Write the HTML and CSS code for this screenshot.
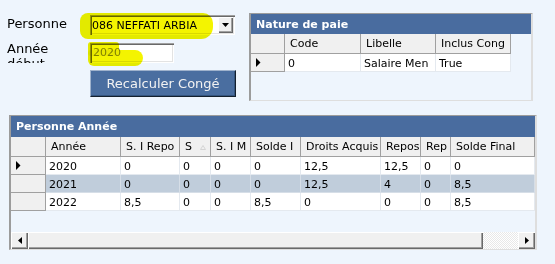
FILE: index.html
```html
<!DOCTYPE html>
<html>
<head>
    <title>Congés</title>
    <link rel="stylesheet" href="styles.css">
</head>
<body>
    <div class="screen">
        <div class="top">
            <div class="form">
                <label class="lbl lbl-first">Personne</label>
                <div class="combo">
                    <span class="combo-text">086 NEFFATI ARBIA</span>
                    <span class="drop"><svg width="7" height="4" viewBox="0 0 7 4"><polygon points="0,0 7,0 3.5,4" fill="#000"/></svg></span>
                </div>
                <label class="lbl lbl-second">Année<br>début</label>
                <div class="textbox">2020</div>
                <button class="btn">Recalculer Congé</button>

                <!-- marker highlights drawn over the fields -->
                <span class="mark mark-combo"></span>
                <span class="mark mark-year-a"></span>
                <span class="mark mark-year-b"></span>
            </div>

            <div class="panel nature">
                <div class="panel-title">Nature de paie</div>
                <div class="grid-row head">
                    <div class="rh"></div>
                    <div class="hc">Code</div>
                    <div class="hc">Libelle</div>
                    <div class="hc">Inclus Cong</div>
                </div>
                <div class="grid-row data">
                    <div class="rh"><svg width="5" height="9" viewBox="0 0 5 9"><polygon points="0,0 4.5,4.5 0,9" fill="#000"/></svg></div>
                    <div class="dc">0</div>
                    <div class="dc">Salaire Men</div>
                    <div class="dc">True</div>
                </div>
            </div>
        </div>

        <div class="panel annees">
            <div class="panel-title">Personne Année</div>
            <div class="grid-row head">
                <div class="rh"></div>
                <div class="hc">Année</div>
                <div class="hc">S. I Repo</div>
                <div class="hc">S <svg class="sort" width="6" height="5" viewBox="0 0 6 5"><polygon points="3,0.5 5.5,4.5 0.5,4.5" fill="none" stroke="#d4d4d4" stroke-width="1"/></svg></div>
                <div class="hc">S. I M</div>
                <div class="hc">Solde I</div>
                <div class="hc">Droits Acquis</div>
                <div class="hc">Repos</div>
                <div class="hc">Rep</div>
                <div class="hc">Solde Final</div>
            </div>
            <div class="grid-row data">
                <div class="rh"><svg width="5" height="9" viewBox="0 0 5 9"><polygon points="0,0 4.5,4.5 0,9" fill="#000"/></svg></div>
                <div class="dc">2020</div>
                <div class="dc">0</div>
                <div class="dc">0</div>
                <div class="dc">0</div>
                <div class="dc">0</div>
                <div class="dc">12,5</div>
                <div class="dc">12,5</div>
                <div class="dc">0</div>
                <div class="dc">0</div>
            </div>
            <div class="grid-row data sel">
                <div class="rh"></div>
                <div class="dc">2021</div>
                <div class="dc">0</div>
                <div class="dc">0</div>
                <div class="dc">0</div>
                <div class="dc">0</div>
                <div class="dc">12,5</div>
                <div class="dc">4</div>
                <div class="dc">0</div>
                <div class="dc">8,5</div>
            </div>
            <div class="grid-row data">
                <div class="rh"></div>
                <div class="dc">2022</div>
                <div class="dc">8,5</div>
                <div class="dc">0</div>
                <div class="dc">0</div>
                <div class="dc">8,5</div>
                <div class="dc">0</div>
                <div class="dc">0</div>
                <div class="dc">0</div>
                <div class="dc">8,5</div>
            </div>
            <div class="filler"></div>
            <div class="hscroll">
                <div class="sb-btn"><svg width="4" height="7" viewBox="0 0 4 7"><polygon points="4,0 0,3.5 4,7" fill="#000"/></svg></div>
                <div class="sb-thumb"></div>
                <div class="sb-track"></div>
                <div class="sb-btn"><svg width="4" height="7" viewBox="0 0 4 7"><polygon points="0,0 4,3.5 0,7" fill="#000"/></svg></div>
            </div>
        </div>
    </div>
</body>
</html>
```

FILE: styles.css
```css
* {
    box-sizing: border-box;
}
body {
    margin: 0;
    background-color: #eef5fd;
    font-family: "DejaVu Sans", Verdana, sans-serif;
    color: #000;
}
.screen {
    padding-top: 13px;
}
.top {
    display: flex;
    align-items: flex-start;
}

/* left form */
.form {
    position: relative;
    width: 249px;
    padding: 2px 0 0 7px;
    display: grid;
    grid-template-columns: 83px 146px;
    align-items: start;
}
.lbl {
    font-size: 13px;
}
.lbl-first {
    line-height: 17px;
}
.lbl-second {
    margin-top: 6px;
    height: 22px;
    line-height: 15px;
    overflow: hidden;
}
.combo {
    width: 145px;
    height: 20px;
    display: flex;
    align-items: center;
    background-color: #fff;
    box-shadow: inset 1px 1px 0 #a0a0a0, inset 2px 2px 0 #696969, inset -1px -1px 0 #fff, inset -2px -2px 0 #e3e3e3;
}
.combo-text {
    flex: 1;
    font-size: 11px;
    padding-left: 2px;
    padding-top: 1px;
    white-space: nowrap;
}
.drop {
    width: 15px;
    height: 16px;
    margin-right: 2px;
    display: flex;
    align-items: center;
    justify-content: center;
    background-color: #f0f0f0;
    box-shadow: inset 1px 1px 0 #fff, inset -1px -1px 0 #696969, inset -2px -2px 0 #a0a0a0;
}
.textbox {
    margin-top: 8px;
    width: 84px;
    height: 20px;
    padding: 3px 0 0 3px;
    font-size: 11px;
    line-height: 14px;
    color: #8c8c8c;
    background-color: #fff;
    box-shadow: inset 1px 1px 0 #a0a0a0, inset 2px 2px 0 #696969, inset -1px -1px 0 #fff, inset -2px -2px 0 #e3e3e3;
}
.btn {
    grid-column: 2;
    margin-top: 7px;
    width: 146px;
    height: 27px;
    padding: 0;
    font-family: "DejaVu Sans", Verdana, sans-serif;
    font-size: 13px;
    color: #f2f2f2;
    background-color: #4a6ea0;
    border: 1px solid;
    border-color: #9fb2cc #14202e #14202e #9fb2cc;
    box-shadow: inset -1px -1px 0 #35557f;
}
.mark {
    position: absolute;
    background-color: #f4f400;
    mix-blend-mode: multiply;
    filter: blur(0.6px);
}
.mark-combo {
    left: 80px;
    top: 0;
    width: 133px;
    height: 26px;
    border-radius: 8px 10px 12px 8px;
}
.mark-year-a {
    left: 88px;
    top: 29px;
    width: 31px;
    height: 14px;
    border-radius: 3px;
}
.mark-year-b {
    left: 88px;
    top: 37px;
    width: 55px;
    height: 16px;
    border-radius: 3px 8px 8px 6px;
}

/* grid panels */
.panel {
    display: flex;
    flex-direction: column;
    border-style: solid;
    border-width: 1px 2px 1px 2px;
    border-color: #9c9c9c #dedede #dedede #9c9c9c;
    font-size: 11px;
    overflow: hidden;
}
.nature {
    width: 284px;
    height: 88px;
}
.annees {
    width: 528px;
    height: 135px;
    margin: 14px 0 0 9px;
}
.panel-title {
    height: 20px;
    padding: 1px 0 0 5px;
    line-height: 19px;
    font-weight: bold;
    color: #fff;
    background-color: #496c9f;
}
.annees .panel-title {
    height: 21px;
    padding-top: 0;
    line-height: 21px;
}
.grid-row {
    display: grid;
}
.nature .grid-row {
    grid-template-columns: 34px 76px 75px 75px;
}
.annees .grid-row {
    grid-template-columns: 35px 75px 59px 31px 40px 50px 80px 40px 30px 84px;
}
.head > div {
    height: 20px;
    line-height: 20px;
    padding-left: 4px;
    background-color: #f0f0f0;
    border-right: 1px solid #a0a0a0;
    border-bottom: 1px solid #a0a0a0;
    white-space: nowrap;
    overflow: hidden;
}
.head .hc {
    padding-left: 5px;
}
.sort {
    margin-left: 5px;
    vertical-align: 0;
}
.data > div {
    height: 18px;
    line-height: 19px;
    padding-left: 3px;
    white-space: nowrap;
    overflow: hidden;
}
.data .dc {
    background-color: #fff;
    border-right: 1px solid #e4e9ef;
    border-bottom: 1px solid #e4e9ef;
}
.data.sel .dc {
    background-color: #c0cddb;
    border-color: #d6dee7;
}
.data .rh {
    display: flex;
    align-items: center;
    padding-left: 5px;
    background-color: #f0f0f0;
    border-right: 1px solid #a0a0a0;
    border-bottom: 1px solid #a0a0a0;
}
.filler {
    flex: 1;
}

/* horizontal scrollbar */
.hscroll {
    display: flex;
    height: 17px;
}
.sb-btn {
    width: 17px;
    display: flex;
    align-items: center;
    justify-content: center;
    background-color: #f0f0f0;
    box-shadow: inset 1px 1px 0 #fff, inset -1px -1px 0 #696969, inset -2px -2px 0 #a0a0a0;
}
.sb-thumb {
    width: 455px;
    background-color: #f0f0f0;
    box-shadow: inset 1px 1px 0 #fff, inset -1px -1px 0 #696969, inset -2px -2px 0 #a0a0a0;
}
.sb-track {
    flex: 1;
    background: repeating-conic-gradient(#e8e8e8 0 25%, #fff 0 50%) 0 0 / 2px 2px;
}
```
